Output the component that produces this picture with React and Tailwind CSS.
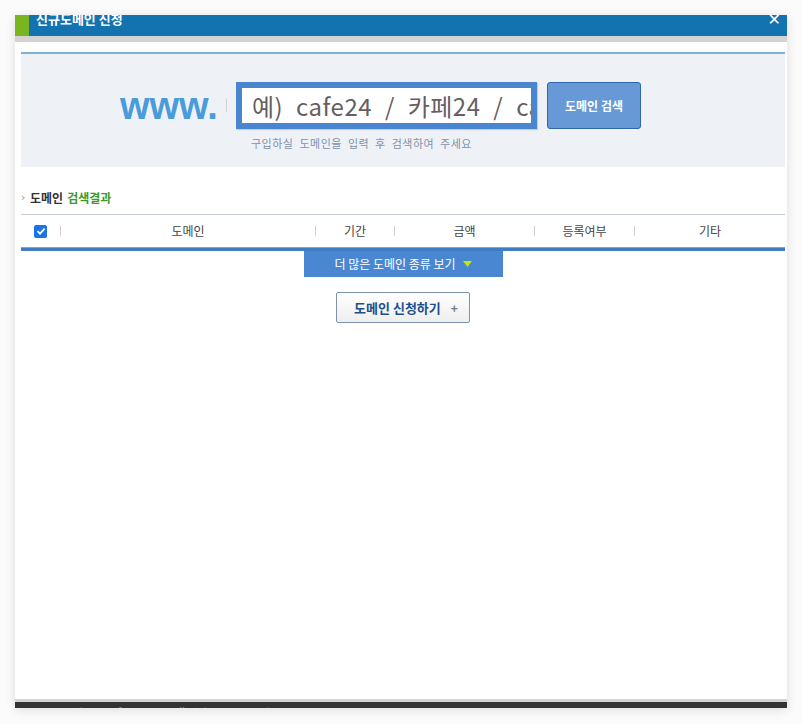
import React from "react";

const KR = { fontFamily: '"Noto Sans CJK KR", "Noto Sans", sans-serif' };

const Sep = () => <span className="h-[10px] w-px bg-[#cfcfcf]" />;

const cols = [
  { label: "도메인", w: "w-[255px]" },
  { label: "기간", w: "w-[79px]" },
  { label: "금액", w: "w-[140px]" },
  { label: "등록여부", w: "w-[100px]" },
  { label: "기타", w: "flex-1" },
];

export default function App() {
  return (
    <div className="h-[724px] w-[802px] overflow-hidden bg-[#fbfbfb] px-[15px] pt-[15px]" style={KR}>
      <div className="relative flex h-[693px] w-[772px] flex-col bg-white shadow-[0_2px_10px_rgba(0,0,0,0.12)]">
        {/* title bar */}
        <div className="flex h-[21px] overflow-hidden bg-[#1373b1]">
          <div className="w-[14px] bg-[#7ab41e]" />
          <div className="-mt-[6px] pl-[7px] text-[13px] font-bold leading-[20px] text-white">신규도메인 신청</div>
        </div>
        <button className="absolute right-[6px] -top-[5px] text-[16px] leading-[20px] text-white" style={{ fontFamily: '"DejaVu Sans", sans-serif' }}>
          ✕
        </button>
        <div className="h-[6px] bg-[#d3d3d3]" />

        {/* body */}
        <div className="flex flex-1 flex-col pl-[6px] pr-[2px] pt-[10px]">
          <div className="h-[115px] border-t-2 border-[#80b0d8] bg-[#eef2f6] pl-[99px] pt-[28px]">
            <div className="flex items-center">
              <span
                className="w-[97px] text-[38px] font-bold leading-none text-[#4a9bd9]"
                style={{ fontFamily: '"Liberation Sans", Arial, sans-serif' }}
              >
                www.
              </span>
              <span className="ml-[9px] h-[13px] w-px bg-[#cdd3da]" />
              <div className="ml-[9px] h-[47px] w-[301px] border-[6px] border-[#4a86cf] bg-white shadow-[1px_1px_1px_rgba(0,0,0,0.15)]">
                <input
                  className="h-full w-full bg-white pl-[10px] text-[24px] tracking-[0.5px] [word-spacing:7px] text-[#665f5f] outline-none placeholder:text-[#665f5f]"
                  placeholder="예) cafe24 / 카페24 / cafe24.com"
                  style={KR}
                />
              </div>
              <button className="ml-[10px] h-[47px] w-[94px] rounded-[3px] border border-[#2f66ab] bg-[#6699d5] text-[12px] font-bold text-white">
                도메인 검색
              </button>
            </div>
            <p className="ml-[131px] mt-[6px] text-[11px] tracking-[0.5px] [word-spacing:3px] text-[#7d93ad]">
              구입하실 도메인을 입력 후 검색하여 주세요
            </p>
          </div>

          <div className="mt-[22px] flex items-center text-[12px] font-bold">
            <span className="w-[9px] text-[11px] font-normal text-[#999]" style={{ fontFamily: '"DejaVu Sans", sans-serif' }}>›</span>
            <span className="text-[#333]">도메인</span>
            <span className="ml-[4px] text-[#3c9a2a]">검색결과</span>
          </div>

          <div className="mt-[7px] border-t border-[#c5ccd6]">
            <div className="flex h-[32px] items-center text-[12px] text-[#444]">
              <div className="flex w-[39px] items-center justify-end">
                <span className="mr-[13px] flex h-[13px] w-[13px] items-center justify-center rounded-[2px] bg-[#1a73e8]">
                  <svg width="10" height="10" viewBox="0 0 10 10">
                    <path d="M1.5 5.2 L4 7.6 L8.6 2.6" stroke="white" strokeWidth="1.8" fill="none" />
                  </svg>
                </span>
              </div>
              {cols.map((c) => (
                <div key={c.label} className={`flex items-center ${c.w}`}>
                  <Sep />
                  <span className="flex-1 text-center">{c.label}</span>
                </div>
              ))}
            </div>
            <div className="h-[4px] border-t-[1px] border-[#75a5db] bg-[#3f7cc2]" />
          </div>

          <div className="flex justify-center">
            <button className="flex h-[26px] w-[199px] items-center justify-center bg-[#4a87d2] text-[12px] text-white">
              더 많은 도메인 종류 보기
              <svg className="ml-[7px]" width="9" height="6" viewBox="0 0 9 6">
                <path d="M0 0 H9 L4.5 6 Z" fill="#c6e70a" />
              </svg>
            </button>
          </div>

          <div className="mt-[15px] flex justify-center">
            <button className="flex h-[31px] w-[134px] items-center justify-center rounded-[2px] border border-[#7d93ad] bg-gradient-to-b from-white to-[#eeeeee] pl-[6px] text-[13px] font-bold text-[#1e4f8a]">
              도메인 신청하기
              <span className="ml-[10px] text-[12px] text-[#6a7a8c]">+</span>
            </button>
          </div>
        </div>

        {/* bottom */}
        <div className="h-[3px] bg-[#d3d3d3]" />
        <div className="h-[6px] overflow-hidden bg-[#333333] pl-[25px]">
          <div className="pt-[2px] text-[11px] leading-[14px] text-[#888]">
            Copyright © Cafe24 Corp. All Rights Reserved.
          </div>
        </div>
      </div>
    </div>
  );
}
